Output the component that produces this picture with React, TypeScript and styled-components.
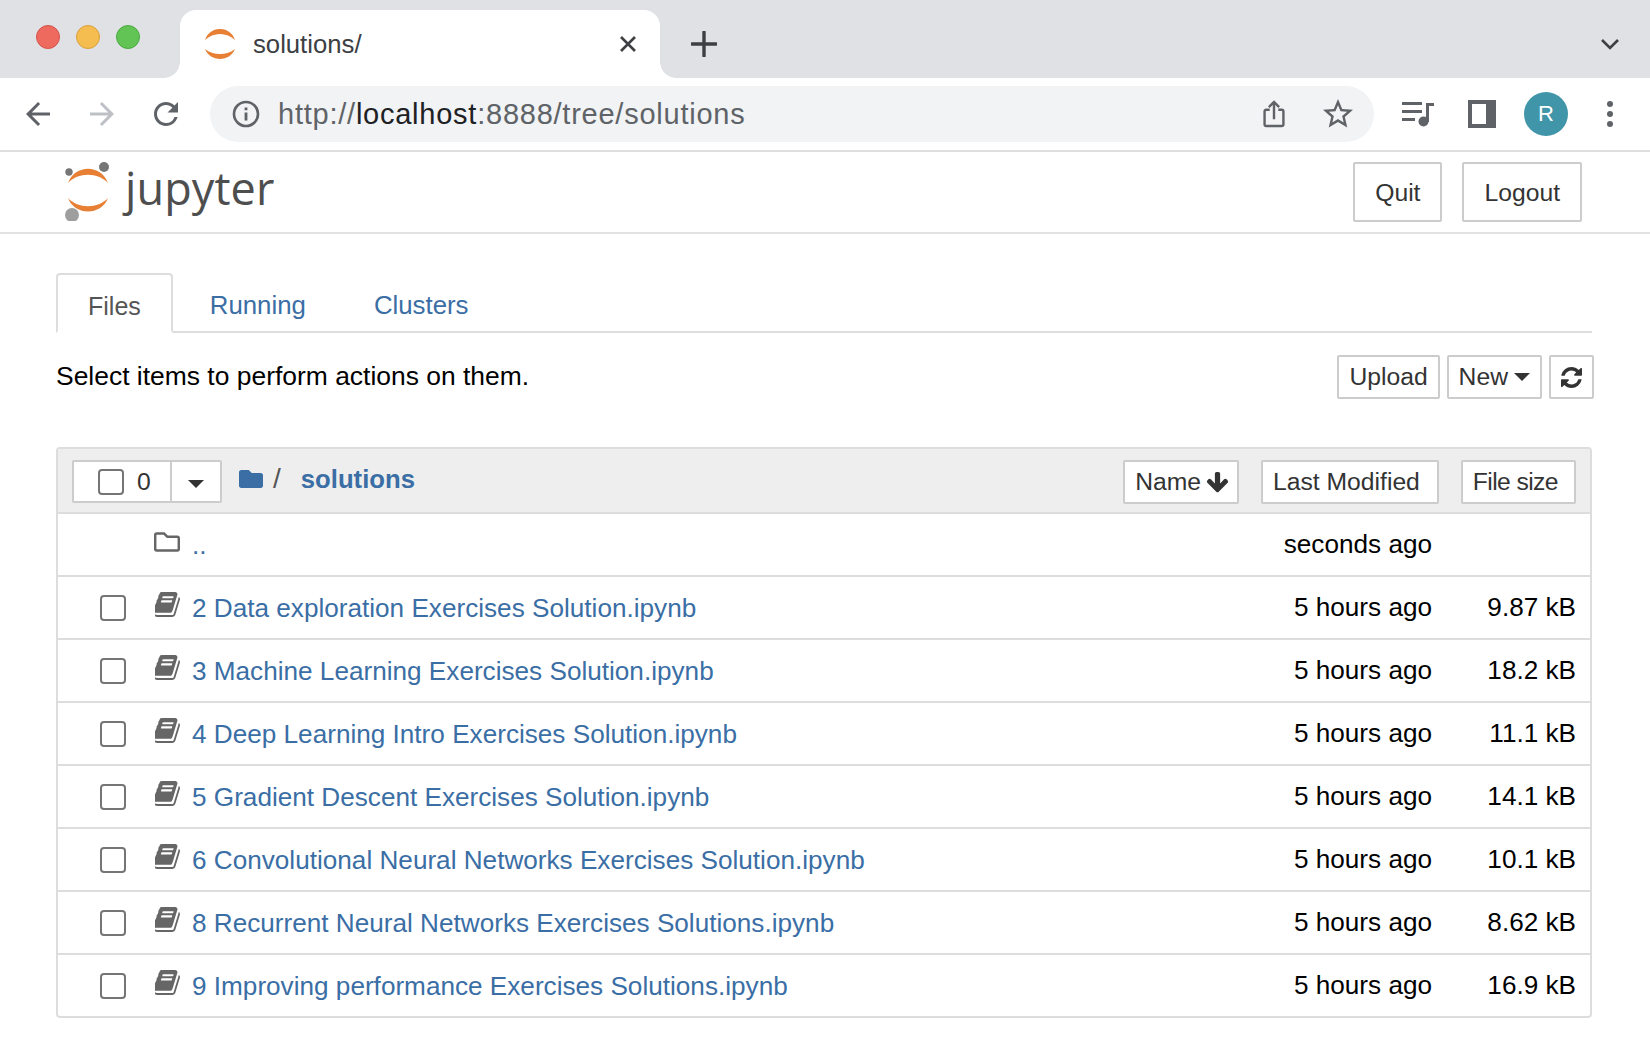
import styled, { createGlobalStyle } from "styled-components";
import { FaFolder, FaRegFolder } from "react-icons/fa";

const GlobalStyle = createGlobalStyle`
  html, body {
    margin: 0;
    padding: 0;
    background: #fff;
    font-family: "Liberation Sans", Arial, sans-serif;
    font-size: 24.7px;
    color: #000;
  }
  * { box-sizing: border-box; }
`;

const TabStrip = styled.div`
  height: 78px;
  background: #dfe1e5;
  display: flex;
  align-items: flex-end;
`;

const Lights = styled.div`
  width: 180px;
  height: 68px;
  padding: 15px 0 0 36px;
  display: flex;
  gap: 16px;
  align-items: flex-start;
`;

const Light = styled.span<{ $fill: string; $edge: string }>`
  width: 24px;
  height: 24px;
  border-radius: 50%;
  background: ${(p) => p.$fill};
  border: 1px solid ${(p) => p.$edge};
`;

const BrowserTab = styled.div`
  position: relative;
  width: 480px;
  height: 68px;
  background: #fff;
  border-radius: 16px 16px 0 0;
  display: flex;
  align-items: center;
  padding: 0 23px 0 25px;
  color: #3c4043;
  font-size: 25.7px;

  &::before,
  &::after {
    content: "";
    position: absolute;
    bottom: 0;
    width: 16px;
    height: 16px;
  }
  &::before {
    left: -16px;
    background: radial-gradient(circle at 0 0, #dfe1e5 15.5px, #fff 16px);
  }
  &::after {
    right: -16px;
    background: radial-gradient(circle at 100% 0, #dfe1e5 15.5px, #fff 16px);
  }
`;

const TabTitle = styled.span`
  flex: 1;
  margin-left: 18px;
`;

const PlusSlot = styled.div`
  width: 88px;
  height: 68px;
  display: flex;
  align-items: center;
  justify-content: center;
`;

const Spacer = styled.div`
  flex: 1;
`;

const ChevronSlot = styled.div`
  width: 40px;
  height: 68px;
  margin-right: 20px;
  display: flex;
  align-items: center;
  justify-content: center;
`;

const Toolbar = styled.div`
  height: 74px;
  padding: 8px 8px 8px 6px;
  display: flex;
  align-items: center;
  border-bottom: 2px solid #dedede;
`;

const ToolSlot = styled.div`
  width: 64px;
  height: 56px;
  flex: none;
  display: flex;
  align-items: center;
  justify-content: center;
`;

const Omnibox = styled.div`
  flex: 1;
  height: 56px;
  margin: 0 12px;
  padding: 0 4px 0 20px;
  background: #f1f3f4;
  border-radius: 28px;
  display: flex;
  align-items: center;
`;

const InfoSlot = styled.div`
  width: 32px;
  height: 32px;
  margin-right: 16px;
  display: flex;
`;

const Url = styled.div`
  flex: 1;
  font-size: 29px;
  color: #5f6368;
  letter-spacing: 0.76px;

  b {
    font-weight: 400;
    color: #202124;
  }
`;

const Avatar = styled.div`
  width: 44px;
  height: 44px;
  border-radius: 50%;
  background: #4095a8;
  color: #fff;
  font-size: 22px;
  display: flex;
  align-items: center;
  justify-content: center;
`;

const Header = styled.header`
  height: 82px;
  border-bottom: 2px solid #e2e2e2;
  padding: 10px 68px 0 62px;
  display: flex;
  align-items: flex-start;
`;

const Logo = styled.div`
  display: flex;
  align-items: center;
  gap: 13px;
  height: 58px;
  color: #4e4e4e;
  font-family: "Open Sans", "Noto Sans", sans-serif;
  font-size: 45px;
  letter-spacing: 0.1px;
  line-height: 1;
`;

const LogoWord = styled.span`
  position: relative;
  top: -4px;
`;

const HeaderButtons = styled.div`
  margin-left: auto;
  display: flex;
  gap: 20px;
`;

const HeaderButton = styled.div`
  height: 60px;
  padding: 2px 20px 0;
  border: 2px solid #ccc;
  border-radius: 2px;
  color: #333;
  display: flex;
  align-items: center;
`;

const Main = styled.main`
  padding: 39px 58px 0 56px;
`;

const Tabs = styled.nav`
  height: 60px;
  border-bottom: 2px solid #ddd;
  display: flex;
  align-items: flex-start;
`;

const TabItem = styled.div<{ $active?: boolean }>`
  height: ${(p) => (p.$active ? "60px" : "58px")};
  padding: 6px ${(p) => (p.$active ? "30px" : "34px")} 0;
  margin-right: ${(p) => (p.$active ? "3px" : "0")};
  display: flex;
  align-items: center;
  font-size: ${(p) => (p.$active ? "25px" : "25.8px")};
  color: ${(p) => (p.$active ? "#555" : "#3a6ea5")};
  background: #fff;
  ${(p) =>
    p.$active &&
    `border: 2px solid #ddd; border-bottom-color: #fff; border-radius: 4px 4px 0 0;`}
`;

const ActionRow = styled.div`
  height: 114px;
  padding-top: 22px;
  display: flex;
  align-items: flex-start;
`;

const Hint = styled.div`
  font-size: 26.45px;
  line-height: 44px;
  margin-top: -1px;
`;

const Actions = styled.div`
  margin-left: auto;
  margin-right: -2px;
  display: flex;
  gap: 7px;
`;

const SmallButton = styled.div`
  height: 44px;
  padding: 0 10px;
  border: 2px solid #ccc;
  border-radius: 2px;
  background: #fff;
  color: #333;
  display: flex;
  align-items: center;
  gap: 6px;
`;

const Panel = styled.section`
  border: 2px solid #ddd;
  border-radius: 4px;
`;

const PanelHead = styled.div`
  height: 65px;
  padding: 11px 14px 0 14px;
  background: #eee;
  border-bottom: 2px solid #ddd;
  display: flex;
  align-items: flex-start;
`;

const SelectGroup = styled.div`
  width: 150px;
  height: 43px;
  border: 2px solid #ccc;
  border-radius: 2px;
  background: #fff;
  color: #333;
  display: flex;
`;

const SelectCount = styled.div`
  width: 98px;
  padding-left: 24px;
  border-right: 2px solid #ccc;
  display: flex;
  align-items: center;
  gap: 13px;
`;

const SelectCaret = styled.div`
  flex: 1;
  display: flex;
  align-items: center;
  justify-content: center;
  padding-top: 5px;
`;

const Caret = styled.span`
  width: 0;
  height: 0;
  border-top: 8px solid #333;
  border-left: 8px solid transparent;
  border-right: 8px solid transparent;
`;

const Check = styled.span`
  width: 26px;
  height: 26px;
  flex: none;
  border: 2px solid #757575;
  border-radius: 4px;
  background: #fff;
`;

const Crumbs = styled.div`
  margin-left: 17px;
  height: 38px;
  display: flex;
  align-items: center;
  color: #3a6ea5;
  font-size: 25.7px;
`;

const Slash = styled.span`
  color: #555;
  font-size: 28px;
  margin: 0 20px 0 10px;
`;

const CrumbName = styled.span`
  font-weight: 700;
`;

const SortButtons = styled.div`
  margin-left: auto;
  display: flex;
  gap: 22px;
`;

const SortButton = styled.div<{ $endPad: number; $track?: number }>`
  height: 44px;
  padding: 0 ${(p) => p.$endPad}px 0 10px;
  border: 2px solid #ccc;
  border-radius: 2px;
  background: #fff;
  color: #333;
  letter-spacing: ${(p) => p.$track ?? 0}px;
  display: flex;
  align-items: center;
  gap: 6px;
`;

const Row = styled.div`
  height: 63px;
  padding: 0 14px 0 42px;
  display: flex;
  align-items: center;
  border-bottom: 2px solid #ddd;
  font-size: 26.15px;

  &:last-child {
    height: 61px;
    border-bottom: 0;
  }
`;

const CheckSlot = styled.div`
  width: 26px;
  margin: 1px 28px 0 0;
  display: flex;
`;

const FileIcon = styled.div`
  width: 26px;
  height: 26px;
  margin: -6px 12px 0 0;
  color: #666;
  display: flex;
  align-items: center;
  justify-content: center;
`;

const FileLink = styled.div`
  flex: 1;
  padding-top: 2px;
  color: #3a6ea5;
`;

const Modified = styled.div`
  text-align: right;
`;

const FileSize = styled.div`
  width: 144px;
  text-align: right;
`;

const JupyterArcs = ({ size }: { size: number }) => (
  <svg width={size} height={size} viewBox="0 0 30 30">
    <path d="M0 11C5-3.700 25-3.700 30 11 22 3 8 3 0 11Z" fill="#e77f35" />
    <path d="M0 20C8 26.700 22 26.700 30 20 25 33.300 5 33.300 0 20Z" fill="#e77f35" />
  </svg>
);

const JupyterMark = () => (
  <svg width="50" height="60" viewBox="0 0 50 60">
    <path d="M6 22C13 3 39 3 46 22 36 11 16 11 6 22Z" fill="#e77f35" />
    <path d="M6 37C16 48 36 48 46 37 39 55 13 55 6 37Z" fill="#e77f35" />
    <circle cx="7" cy="11" r="3.700" fill="#767677" />
    <circle cx="42" cy="6" r="5" fill="#767677" />
    <circle cx="10" cy="54" r="7" fill="#9e9e9e" />
  </svg>
);

const BookIcon = () => (
  <svg width="25" height="25" viewBox="128 128 1536 1536" fill="currentColor">
    <path d="M1639 478q40 57 18 129l-275 906q-19 64-76.500 107.500t-122.500 43.500h-923q-77 0-148.500-53.500t-99.500-131.500q-24-67-2-127 0-4 3-27t4-37q1-8-3-21.500t-3-19.500q2-11 8-21t16.500-23.500 16.500-23.500q23-38 45-91.500t30-91.500q3-10 .5-30t-.5-28q3-11 17-28t17-23q21-36 42-92t25-90q1-9-2.500-32t.5-28q4-13 22-30.500t22-22.500q19-26 42.500-84.500t27.500-96.500q1-8-3-25.500t-2-26.500q2-8 9-18t18-23 17-21q8-12 16.500-30.500t15-35 16-36 19.500-32 26.500-23.500 36-11.500 47.500 5.500l-1 3q38-9 51-9h761q74 0 114 56t18 130l-274 906q-36 119-71.500 153.500t-128.500 34.500h-869q-27 0-38 15-11 16-1 43 24 70 144 70h923q29 0 56-15.500t35-41.500l300-987q7-22 5-57 38 15 59 43zm-1064 2q-4 13 2 22.500t20 9.500h608q13 0 25.500-9.500t16.500-22.500l21-64q4-13-2-22.500t-20-9.500h-608q-13 0-25.500 9.500t-16.500 22.500zm-83 256q-4 13 2 22.500t20 9.500h608q13 0 25.500-9.500t16.500-22.500l21-64q4-13-2-22.500t-20-9.500h-608q-13 0-25.500 9.500t-16.500 22.500z" />
  </svg>
);

const RefreshIcon = () => (
  <svg width="21" height="21" viewBox="128 128 1536 1536" fill="#333">
    <path d="M1639 1056q0 5-1 7-64 268-268 434.500t-478 166.500q-146 0-282.500-55t-243.500-157l-129 129q-19 19-45 19t-45-19-19-45v-448q0-26 19-45t45-19h448q26 0 45 19t19 45-19 45l-137 137q71 66 161 102t187 36q134 0 250-65t186-179q11-17 53-117 8-23 30-23h192q13 0 22.500 9.500t9.500 22.500zm25-800v448q0 26-19 45t-45 19h-448q-26 0-45-19t-19-45 19-45l138-138q-148-137-349-137-134 0-250 65t-186 179q-11 17-53 117-8 23-30 23h-199q-13 0-22.500-9.500t-9.500-22.500v-7q65-268 270-434.500t480-166.500q146 0 284 55.500t245 156.500l130-129q19-19 45-19t45 19 19 45z" />
  </svg>
);

const ArrowDownIcon = () => (
  <svg width="21" height="21" viewBox="128 128 1536 1536" fill="#333">
    <path d="M1675 832q0 53-37 90l-651 652q-38 38-91 38-54 0-90-38l-651-652q-38-36-38-90 0-53 38-91l74-75q39-37 91-37 53 0 90 37l294 294v-704q0-52 38-90t90-38h128q52 0 90 38t38 90v704l294-294q37-37 90-37 52 0 91 37l75 75q37 39 37 91z" />
  </svg>
);

const files = [
  { name: "2 Data exploration Exercises Solution.ipynb", size: "9.87 kB" },
  { name: "3 Machine Learning Exercises Solution.ipynb", size: "18.2 kB" },
  { name: "4 Deep Learning Intro Exercises Solution.ipynb", size: "11.1 kB" },
  { name: "5 Gradient Descent Exercises Solution.ipynb", size: "14.1 kB" },
  { name: "6 Convolutional Neural Networks Exercises Solution.ipynb", size: "10.1 kB" },
  { name: "8 Recurrent Neural Networks Exercises Solutions.ipynb", size: "8.62 kB" },
  { name: "9 Improving performance Exercises Solutions.ipynb", size: "16.9 kB" },
];

export default function App() {
  return (
    <>
      <GlobalStyle />
      <TabStrip>
        <Lights>
          <Light $fill="#ee6a5f" $edge="#d5534a" />
          <Light $fill="#f5bd4f" $edge="#d9a03c" />
          <Light $fill="#61c454" $edge="#4ca93f" />
        </Lights>
        <BrowserTab>
          <JupyterArcs size={30} />
          <TabTitle>solutions/</TabTitle>
          <svg width="18" height="18" viewBox="0 0 18 18">
            <path d="M2 2l14 14M16 2L2 16" stroke="#3c4043" strokeWidth="2.6" />
          </svg>
        </BrowserTab>
        <PlusSlot>
          <svg width="26" height="26" viewBox="0 0 26 26">
            <path d="M13 1v24M1 13h24" stroke="#3c4043" strokeWidth="3.4" strokeLinecap="round" />
          </svg>
        </PlusSlot>
        <Spacer />
        <ChevronSlot>
          <svg width="20" height="12" viewBox="0 0 20 12">
            <path d="M2 2l8 8 8-8" fill="none" stroke="#3c4043" strokeWidth="2.6" />
          </svg>
        </ChevronSlot>
      </TabStrip>

      <Toolbar>
        <ToolSlot>
          <svg width="36" height="36" viewBox="0 0 24 24" fill="#5f6368">
            <path d="M20 11H7.83l5.59-5.59L12 4l-8 8 8 8 1.41-1.41L7.83 13H20v-2z" />
          </svg>
        </ToolSlot>
        <ToolSlot>
          <svg width="36" height="36" viewBox="0 0 24 24" fill="#bdc1c6">
            <path d="M12 4l-1.41 1.41L16.170 11H4v2h12.170l-5.580 5.590L12 20l8-8z" />
          </svg>
        </ToolSlot>
        <ToolSlot>
          <svg width="36" height="36" viewBox="0 0 24 24" fill="#5f6368">
            <path d="M17.65 6.35A7.958 7.958 0 0 0 12 4c-4.42 0-7.99 3.58-7.99 8s3.57 8 7.99 8c3.73 0 6.84-2.55 7.73-6h-2.08A5.99 5.99 0 0 1 12 18c-3.31 0-6-2.69-6-6s2.69-6 6-6c1.66 0 3.14.69 4.22 1.78L13 11h7V4l-2.35 2.35z" />
          </svg>
        </ToolSlot>
        <Omnibox>
          <InfoSlot>
            <svg width="32" height="32" viewBox="0 0 32 32">
              <circle cx="16" cy="16" r="12" fill="none" stroke="#5f6368" strokeWidth="2.6" />
              <path d="M14.600 14.500h2.800v8h-2.800zM14.600 9.500h2.800v2.800h-2.800z" fill="#5f6368" />
            </svg>
          </InfoSlot>
          <Url>
            http://<b>localhost</b>:8888/tree/solutions
          </Url>
          <ToolSlot>
            <svg width="24" height="30" viewBox="0 0 28 34" fill="none" stroke="#5f6368" strokeWidth="2.8">
              <path d="M9 12H5a2 2 0 0 0-2 2v15a2 2 0 0 0 2 2h18a2 2 0 0 0 2-2V14a2 2 0 0 0-2-2h-4" />
              <path d="M14 23V3M8 9l6-6 6 6" />
            </svg>
          </ToolSlot>
          <ToolSlot>
            <svg width="36" height="36" viewBox="0 0 24 24" fill="#5f6368">
              <path d="M22 9.240l-7.190-.620L12 2 9.190 8.630 2 9.240l5.460 4.730L5.820 21 12 17.270 18.180 21l-1.630-7.030L22 9.240zM12 15.400l-3.760 2.270 1-4.280-3.320-2.880 4.380-.380L12 6.100l1.710 4.040 4.380.380-3.320 2.880 1 4.280L12 15.400z" />
            </svg>
          </ToolSlot>
        </Omnibox>
        <ToolSlot>
          <svg width="32" height="26" viewBox="0 0 32 26" fill="#5f6368">
            <path d="M0 1h20v3H0zM0 9h20v3H0zM0 17h13v3H0z" />
            <path d="M24 2h8v3h-5v16h-3z" />
            <circle cx="21.500" cy="20.500" r="5" />
          </svg>
        </ToolSlot>
        <ToolSlot>
          <svg width="28" height="28" viewBox="0 0 28 28">
            <path d="M0 0h28v28H0zM4 4v20h14V4z" fill="#5f6368" fillRule="evenodd" />
            <path d="M18 4h6v20h-6z" fill="#5f6368" />
          </svg>
        </ToolSlot>
        <ToolSlot>
          <Avatar>R</Avatar>
        </ToolSlot>
        <ToolSlot>
          <svg width="8" height="28" viewBox="0 0 8 28" fill="#5f6368">
            <circle cx="4" cy="4" r="3" />
            <circle cx="4" cy="14" r="3" />
            <circle cx="4" cy="24" r="3" />
          </svg>
        </ToolSlot>
      </Toolbar>

      <Header>
        <Logo>
          <JupyterMark />
          <LogoWord>jupyter</LogoWord>
        </Logo>
        <HeaderButtons>
          <HeaderButton>Quit</HeaderButton>
          <HeaderButton>Logout</HeaderButton>
        </HeaderButtons>
      </Header>

      <Main>
        <Tabs>
          <TabItem $active>Files</TabItem>
          <TabItem>Running</TabItem>
          <TabItem>Clusters</TabItem>
        </Tabs>

        <ActionRow>
          <Hint>Select items to perform actions on them.</Hint>
          <Actions>
            <SmallButton>Upload</SmallButton>
            <SmallButton>
              New <Caret />
            </SmallButton>
            <SmallButton>
              <RefreshIcon />
            </SmallButton>
          </Actions>
        </ActionRow>

        <Panel>
          <PanelHead>
            <SelectGroup>
              <SelectCount>
                <Check />0
              </SelectCount>
              <SelectCaret>
                <Caret />
              </SelectCaret>
            </SelectGroup>
            <Crumbs>
              <FaFolder size={24} />
              <Slash>/</Slash>
              <CrumbName>solutions</CrumbName>
            </Crumbs>
            <SortButtons>
              <SortButton $endPad={9}>
                Name <ArrowDownIcon />
              </SortButton>
              <SortButton $endPad={17}>Last Modified</SortButton>
              <SortButton $endPad={16} $track={-0.6}>File size</SortButton>
            </SortButtons>
          </PanelHead>

          <Row>
            <CheckSlot />
            <FileIcon>
              <FaRegFolder size={26} />
            </FileIcon>
            <FileLink>..</FileLink>
            <Modified>seconds ago</Modified>
            <FileSize />
          </Row>
          {files.map((file) => (
            <Row key={file.name}>
              <CheckSlot>
                <Check />
              </CheckSlot>
              <FileIcon>
                <BookIcon />
              </FileIcon>
              <FileLink>{file.name}</FileLink>
              <Modified>5 hours ago</Modified>
              <FileSize>{file.size}</FileSize>
            </Row>
          ))}
        </Panel>
      </Main>
    </>
  );
}
